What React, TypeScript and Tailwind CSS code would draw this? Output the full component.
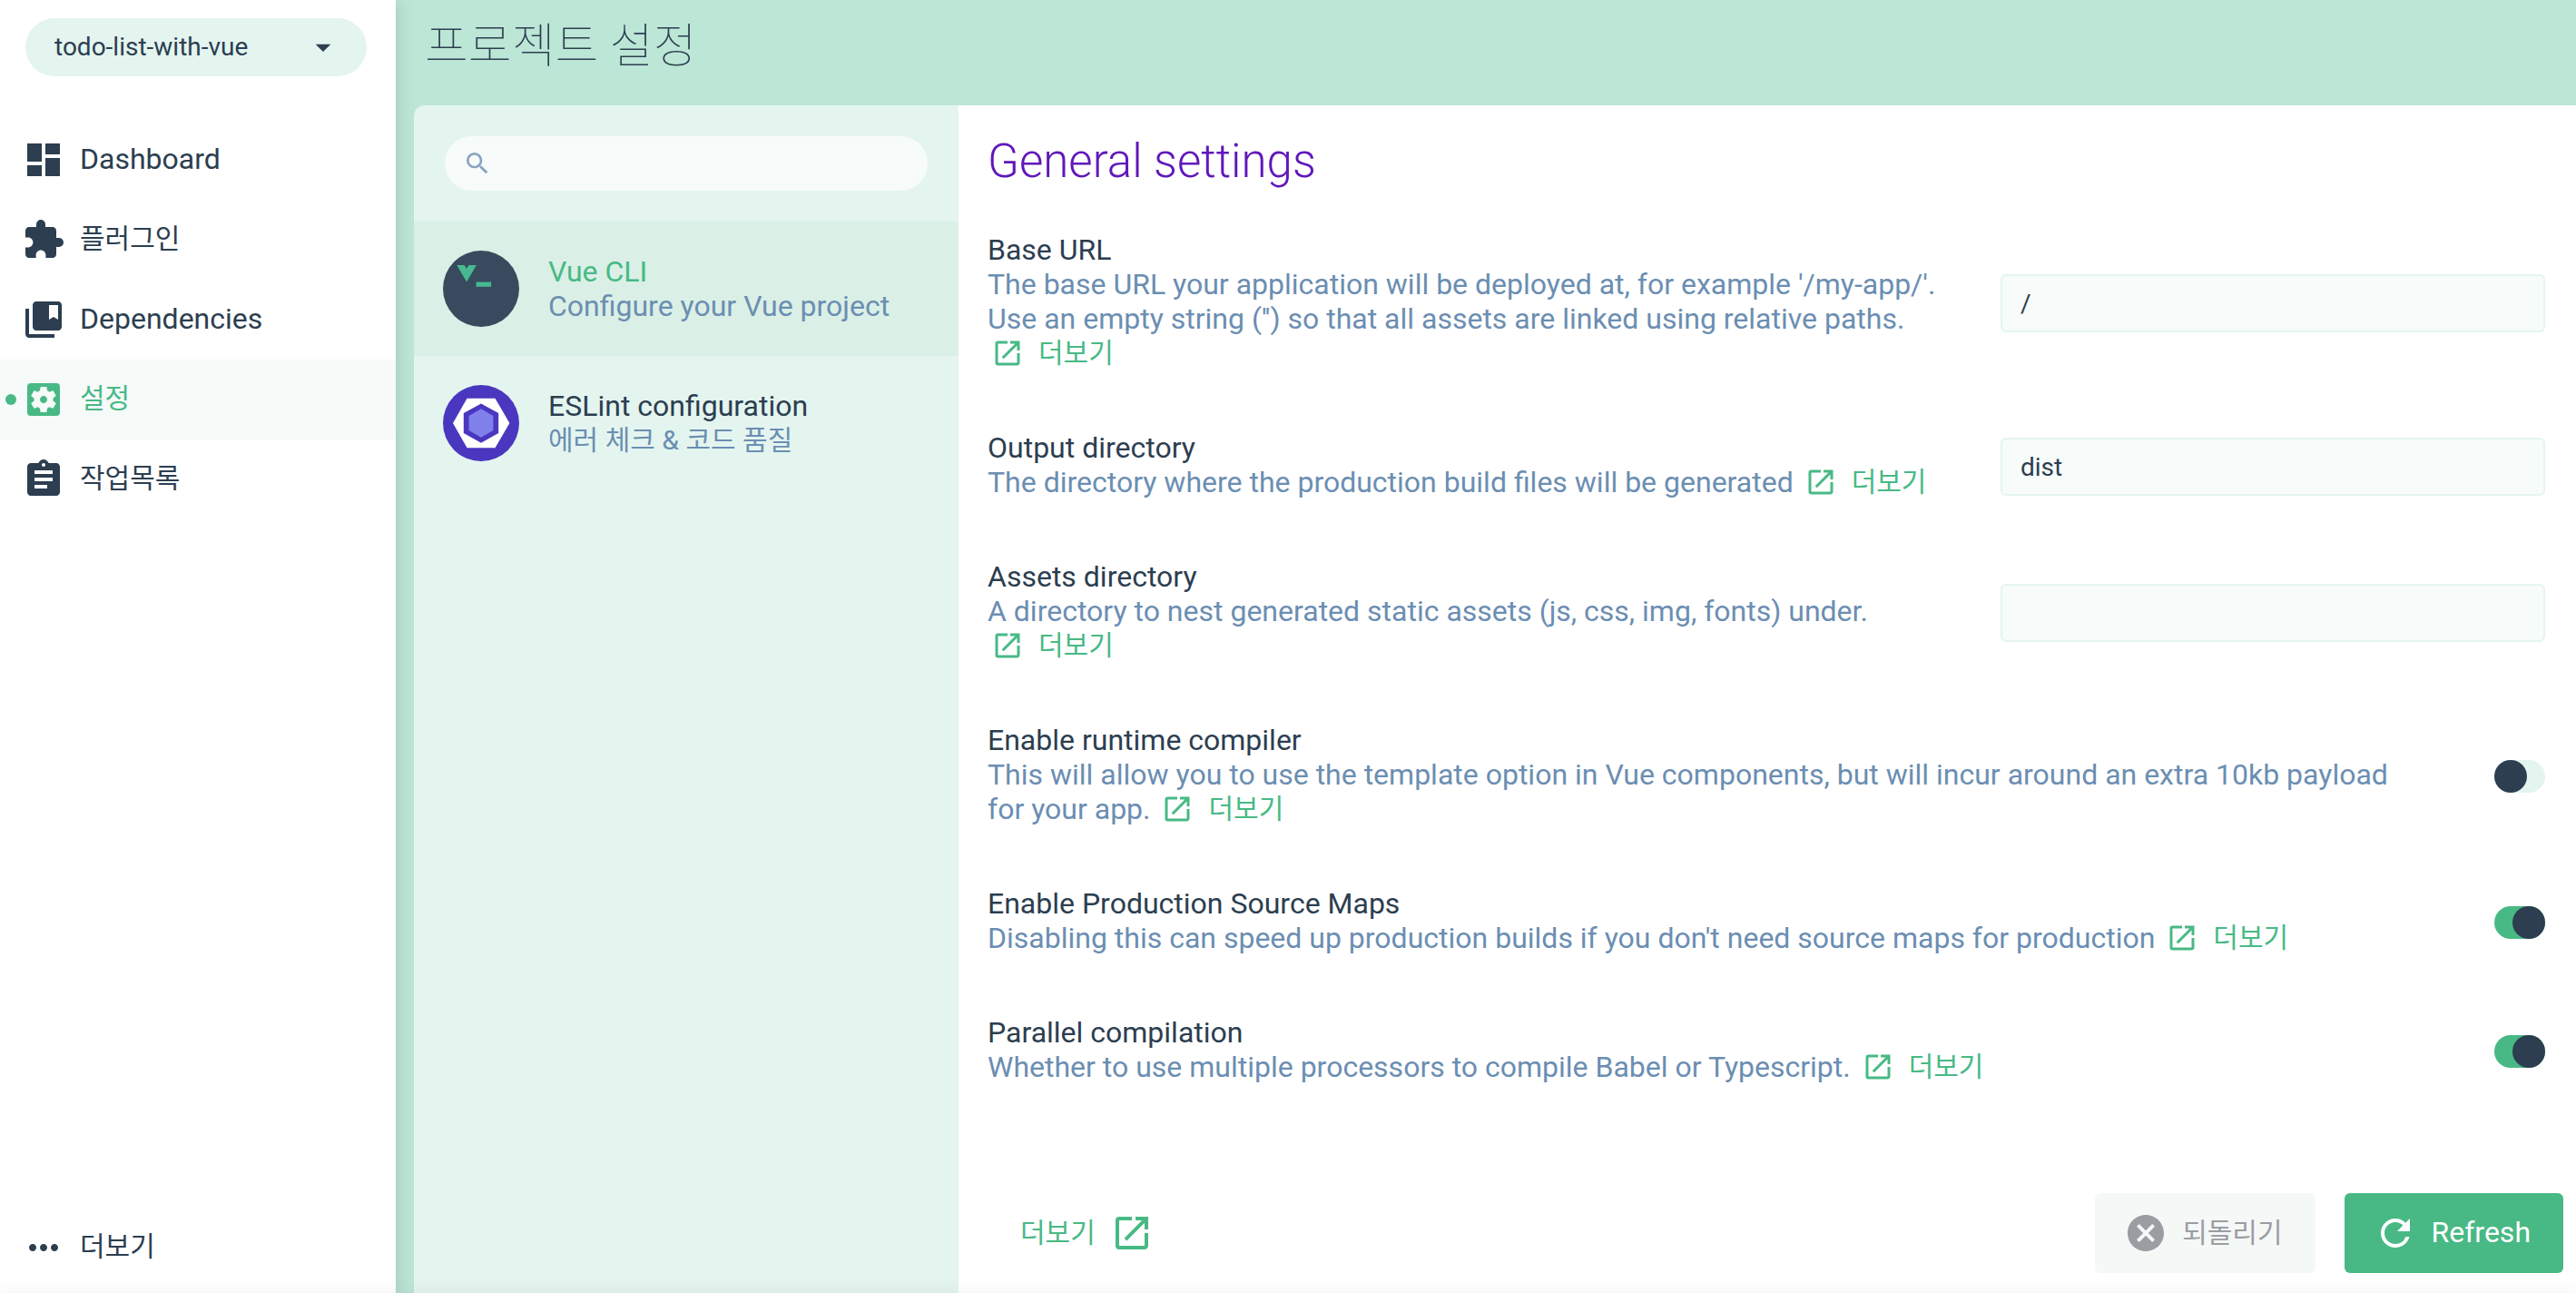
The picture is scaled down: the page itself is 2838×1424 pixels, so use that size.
import { useId, useState } from "react";
import type { ReactNode } from "react";
import type { IconType } from "react-icons";
import {
  MdArrowDropDown,
  MdAssignment,
  MdCancel,
  MdCollectionsBookmark,
  MdDashboard,
  MdExtension,
  MdMoreHoriz,
  MdOpenInNew,
  MdRefresh,
  MdSearch,
  MdSettingsApplications,
} from "react-icons/md";

type NavItem = { label: string; icon: IconType; korean?: boolean; active?: boolean };

const navItems: NavItem[] = [
  { label: "Dashboard", icon: MdDashboard },
  { label: "플러그인", icon: MdExtension, korean: true },
  { label: "Dependencies", icon: MdCollectionsBookmark },
  { label: "설정", icon: MdSettingsApplications, korean: true, active: true },
  { label: "작업목록", icon: MdAssignment, korean: true },
];

function NavLink({ label, icon: Icon, korean, active }: NavItem) {
  return (
    <a
      href="#"
      aria-current={active ? "page" : undefined}
      className={`relative flex h-[88px] items-center gap-4 px-6 ${
        active ? "bg-[#f6faf9] text-[#48b985]" : "text-[#2c3e50]"
      }`}
    >
      {active && <span className="absolute left-1.5 size-3 rounded-full bg-[#48b985]" />}
      <Icon className="size-12 shrink-0" />
      <span className={korean ? "pb-1 text-[30px]" : "pb-0.5 text-[32px]"}>{label}</span>
    </a>
  );
}

function Sidebar() {
  return (
    <aside className="relative z-10 flex w-[436px] shrink-0 flex-col bg-white pb-1.5 shadow-[0_0_20px_rgba(0,0,0,0.15)]">
      <div className="relative mt-5 mr-8 mb-12 ml-7 flex items-center">
        <select
          aria-label="Project"
          className="h-16 w-full appearance-none rounded-full bg-[#e4f5ef] px-8 text-[28px] text-[#2c3e50]"
        >
          <option>todo-list-with-vue</option>
        </select>
        <MdArrowDropDown className="pointer-events-none absolute right-7 size-10" />
      </div>
      <nav className="flex grow flex-col">
        {navItems.map((item) => (
          <NavLink key={item.label} {...item} />
        ))}
        <div className="mt-auto">
          <NavLink label="더보기" icon={MdMoreHoriz} korean />
        </div>
      </nav>
    </aside>
  );
}

function VueCliLogo() {
  return (
    <svg viewBox="0 0 84 84" className="size-[84px] shrink-0" aria-hidden="true">
      <circle cx="42" cy="42" r="42" fill="#384b5e" />
      <path d="M15.3 16h8.2l2.5 3.8 2.5-3.8h8.4L26.1 34.6z" fill="#48b892" />
      <path d="M36.6 34.6h16.5v5.2H36.6z" fill="#48b892" />
    </svg>
  );
}

function EslintLogo() {
  return (
    <svg viewBox="0 0 84 84" className="size-[84px] shrink-0" aria-hidden="true">
      <circle cx="42" cy="42" r="42" fill="#4a37bf" />
      <path d="M11 42 26.5 14.7h31L73.4 42 57.5 69.3h-31z" fill="#fff" />
      <path d="M42 20.4 61.2 31v22L42 63.8 22.8 53V31z" fill="#4a37bf" />
      <path d="M42 26.2 55.4 34v16L42 57.8 28.6 50V34z" fill="#8080ec" />
    </svg>
  );
}

type ConfigItemProps = {
  logo: ReactNode;
  name: string;
  description: string;
  korean?: boolean;
  selected?: boolean;
};

function ConfigItem({ logo, name, description, korean, selected }: ConfigItemProps) {
  return (
    <button
      type="button"
      aria-pressed={!!selected}
      className={`flex h-[148px] w-full items-center gap-8 px-8 text-left text-[32px] leading-[38px] ${
        selected ? "bg-[#daf0e6]" : ""
      }`}
    >
      {logo}
      <span className="flex flex-col">
        <span className={selected ? "text-[#48b985]" : "text-[#2c3e50]"}>{name}</span>
        <span className={`text-[#6b8eb2] ${korean ? "text-[30px]" : ""}`}>{description}</span>
      </span>
    </button>
  );
}

function ConfigList() {
  return (
    <section className="w-[600px] shrink-0 bg-[#e4f5ef]">
      <label className="mx-[34px] my-[34px] flex h-[60px] items-center gap-3 rounded-full bg-[#f7fbfa] px-5">
        <MdSearch className="size-8 shrink-0 text-[#88a3c1]" />
        <input
          type="search"
          aria-label="Search"
          className="w-full min-w-0 bg-transparent text-[28px] outline-none"
        />
      </label>
      <ConfigItem logo={<VueCliLogo />} name="Vue CLI" description="Configure your Vue project" selected />
      <ConfigItem logo={<EslintLogo />} name="ESLint configuration" description="에러 체크 & 코드 품질" korean />
    </section>
  );
}

type Setting = { name: string; description: string; value: string | boolean };

const settings: Setting[] = [
  {
    name: "Base URL",
    description:
      "The base URL your application will be deployed at, for example '/my-app/'. Use an empty string ('') so that all assets are linked using relative paths.",
    value: "/",
  },
  {
    name: "Output directory",
    description: "The directory where the production build files will be generated",
    value: "dist",
  },
  {
    name: "Assets directory",
    description: "A directory to nest generated static assets (js, css, img, fonts) under.",
    value: "",
  },
  {
    name: "Enable runtime compiler",
    description:
      "This will allow you to use the template option in Vue components, but will incur around an extra 10kb payload for your app.",
    value: false,
  },
  {
    name: "Enable Production Source Maps",
    description: "Disabling this can speed up production builds if you don't need source maps for production",
    value: true,
  },
  {
    name: "Parallel compilation",
    description: "Whether to use multiple processors to compile Babel or Typescript.",
    value: true,
  },
];

function Toggle({ id, initial }: { id: string; initial: boolean }) {
  const [on, setOn] = useState(initial);
  return (
    <label className="relative ml-16 flex h-9 w-14 shrink-0 cursor-pointer">
      <input
        id={id}
        type="checkbox"
        role="switch"
        checked={on}
        onChange={(event) => setOn(event.target.checked)}
        className="peer sr-only"
      />
      <span className="flex w-full rounded-full bg-[#e4f5ef] peer-checked:justify-end peer-checked:bg-[#48b985]">
        <span className="size-9 rounded-full bg-[#2c3e50]" />
      </span>
    </label>
  );
}

function SettingRow({ name, description, value }: Setting) {
  const id = useId();
  return (
    <div className="flex items-center gap-8 pt-8 pb-[30px]">
      <div className="grow pb-1 text-[32px] leading-[38px]">
        <label htmlFor={id} className="block">
          {name}
        </label>
        <p className="text-[#6b8eb2]">
          {description}{" "}
          <a href="#" className="ml-1 inline-flex h-[38px] items-center gap-4 align-top text-[#48b985]">
            <MdOpenInNew className="size-9" />
            <span className="text-[30px]">더보기</span>
          </a>
        </p>
      </div>
      {typeof value === "string" ? (
        <input
          id={id}
          type="text"
          defaultValue={value}
          className="h-16 w-[600px] shrink-0 rounded-md border-2 border-[#e4f5ef] bg-[#f7fbfa] px-5 text-[28px]"
        />
      ) : (
        <Toggle id={id} initial={value} />
      )}
    </div>
  );
}

function SettingsPanel() {
  return (
    <section className="flex min-w-0 grow flex-col bg-white">
      <div className="grow pt-8 pr-[34px] pl-8">
        <h2 className="mb-4 text-[51px] leading-[60px] font-light text-[#6118b9]">General settings</h2>
        {settings.map((setting) => (
          <SettingRow key={setting.name} {...setting} />
        ))}
      </div>
      <footer className="flex items-center gap-8 pr-3.5 pb-[22px] pl-8">
        <a href="#" className="mr-auto flex items-center gap-4 px-9 text-[30px] text-[#48b985]">
          <span className="pb-0.5">더보기</span>
          <MdOpenInNew className="size-12" />
        </a>
        <button
          type="button"
          disabled
          className="flex h-[88px] items-center gap-4 rounded-md bg-[#f4f8f7] pr-9 pl-8 text-[30px] text-[#9a9da2]"
        >
          <MdCancel className="size-12" />
          <span className="pb-0.5">되돌리기</span>
        </button>
        <button
          type="button"
          className="flex h-[88px] items-center gap-4 rounded-md bg-[#48b985] pr-9 pl-8 text-[32px] text-white"
        >
          <MdRefresh className="size-12" />
          <span className="pb-0.5">Refresh</span>
        </button>
      </footer>
    </section>
  );
}

export default function App() {
  return (
    <div className="relative flex h-screen overflow-hidden bg-[#bce6d5] font-[Roboto,'Noto_Sans_CJK_KR',sans-serif] text-[#2c3e50]">
      <Sidebar />
      <main className="flex min-w-0 grow flex-col pl-5">
        <header className="h-[116px] shrink-0 px-3 pt-[22px]">
          <h1 className="text-[52px] leading-[60px] font-thin">프로젝트 설정</h1>
        </header>
        <div className="flex min-h-0 grow overflow-hidden rounded-tl-xl">
          <ConfigList />
          <SettingsPanel />
        </div>
      </main>
      <div
        aria-hidden="true"
        className="absolute inset-x-0 top-full z-20 h-14 shadow-[0_0_20px_rgba(0,0,0,0.06)]"
      />
    </div>
  );
}
